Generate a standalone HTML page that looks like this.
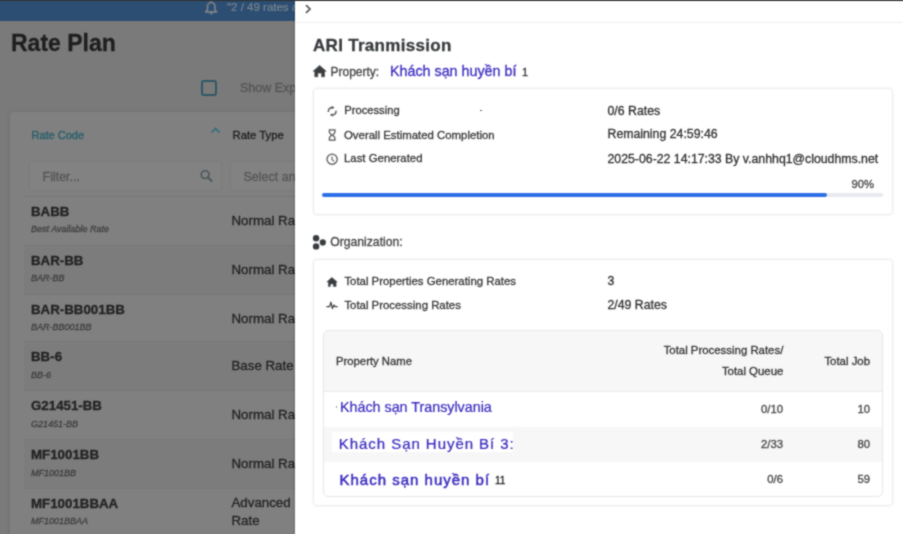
<!DOCTYPE html>
<html><head><meta charset="utf-8"><style>
html,body{margin:0;padding:0;width:903px;height:534px;overflow:hidden;background:#fff}
body{position:relative;font-family:"Liberation Sans", sans-serif}
#wrap{position:absolute;left:0;top:0;width:903px;height:534px;overflow:hidden;filter:url(#bl)}
.t{position:absolute;white-space:nowrap;font-family:"Liberation Sans", sans-serif;-webkit-text-stroke:0.3px}
</style></head><body><svg width="0" height="0" style="position:absolute"><filter id="bl" x="0" y="0" width="903" height="534" filterUnits="userSpaceOnUse" color-interpolation-filters="sRGB"><feConvolveMatrix order="3" kernelMatrix="1 2 1 2 8 2 1 2 1" divisor="20" edgeMode="duplicate"/></filter></svg><div id="wrap">
<div style="position:absolute;left:0px;top:0px;width:903px;height:1px;background:#2f3235"></div>
<div style="position:absolute;left:0px;top:1px;width:295px;height:19.5px;background:#2b4e72"></div>
<div style="position:absolute;left:0px;top:20.5px;width:295px;height:514px;background:#7a7a7a"></div>
<svg style="position:absolute;left:200px;top:0px" width="22" height="18" viewBox="0 0 22 18"><path d="M5.6 11.8 C7.2 11 7.5 10 7.5 9 V6.6 A3.7 4.3 0 0 1 14.9 6.6 V9 C14.9 10 15.2 11 16.8 11.8 Z" fill="none" stroke="#7e8288" stroke-width="1.7" stroke-linejoin="round"/><path d="M9.9 12.6 A1.3 1.5 0 0 0 12.5 12.6 Z" fill="#7e8288" stroke="#7e8288" stroke-width="0.8"/><circle cx="11.2" cy="1.9" r="0.8" fill="#7e8288"/></svg>
<div class="t" style="left:227px;top:1.87px;font-size:11.5px;line-height:11.5px;color:#7c8590;font-weight:normal;font-style:normal;letter-spacing:0px;-webkit-text-stroke:0.2px #7c8590;">"2 / 49 rates a</div>
<div class="t" style="left:11px;top:31.93px;font-size:23px;line-height:23px;color:#1e1e1e;font-weight:bold;font-style:normal;letter-spacing:0px;">Rate Plan</div>
<div style="position:absolute;left:200.5px;top:80px;width:16px;height:16px;box-sizing:border-box;border:2px solid #2d5866;border-radius:3px"></div>
<div class="t" style="left:240px;top:82.02px;font-size:12.5px;line-height:12.5px;color:#555;font-weight:normal;font-style:normal;letter-spacing:0px;">Show Exp</div>
<div style="position:absolute;left:10px;top:112px;width:300px;height:430px;background:#808080;border-radius:4px;box-shadow:0 0 4px rgba(0,0,0,0.1)"></div>
<div class="t" style="left:31.5px;top:130.29px;font-size:11px;line-height:11px;color:#2a5f6c;font-weight:normal;font-style:normal;letter-spacing:0px;-webkit-text-stroke:0.4px #2a5f6c;">Rate Code</div>
<svg style="position:absolute;left:210px;top:126px" width="11" height="8" viewBox="0 0 11 8"><path d="M1.5 6.5 L5.5 2.5 L9.5 6.5" fill="none" stroke="#2e6b7c" stroke-width="1.6"/></svg>
<div class="t" style="left:232.5px;top:129.73px;font-size:11.3px;line-height:11.3px;color:#1c1c1c;font-weight:normal;font-style:normal;letter-spacing:0px;-webkit-text-stroke:0.3px #1c1c1c;">Rate Type</div>
<div style="position:absolute;left:28.5px;top:160.7px;width:193px;height:30.3px;box-sizing:border-box;border:1px solid #7b7b7b;border-radius:3px;background:#828282"></div>
<div class="t" style="left:42.5px;top:170.52px;font-size:12.5px;line-height:12.5px;color:#565656;font-weight:normal;font-style:normal;letter-spacing:0px;-webkit-text-stroke:0.3px #565656;">Filter...</div>
<svg style="position:absolute;left:195px;top:160px" width="24" height="24" viewBox="0 0 24 24"><circle cx="10.1" cy="14.6" r="3.9" fill="none" stroke="#4b555a" stroke-width="1.6"/><path d="M13 17.5 L16.6 21" stroke="#4b555a" stroke-width="1.8" stroke-linecap="round"/></svg>
<div style="position:absolute;left:229.5px;top:161px;width:80px;height:30px;box-sizing:border-box;border:1px solid #7b7b7b;border-radius:3px;background:#828282"></div>
<div class="t" style="left:243.5px;top:170.52px;font-size:12.5px;line-height:12.5px;color:#565656;font-weight:normal;font-style:normal;letter-spacing:0px;-webkit-text-stroke:0.3px #565656;">Select an</div>
<div style="position:absolute;left:24px;top:195.5px;width:290px;height:1px;background:#777"></div>
<div class="t" style="left:31px;top:204.54px;font-size:13.3px;line-height:13.3px;color:#222;font-weight:bold;font-style:normal;letter-spacing:0px;">BABB</div>
<div class="t" style="left:31px;top:225.48px;font-size:9px;line-height:9px;color:#3e3e3e;font-weight:normal;font-style:italic;letter-spacing:0px;">Best Available Rate</div>
<div class="t" style="left:231.5px;top:213.84px;font-size:13.3px;line-height:13.3px;color:#222;font-weight:normal;font-style:normal;letter-spacing:0px;">Normal Rate</div>
<div style="position:absolute;left:24px;top:244.5px;width:290px;height:49.0px;background:#7c7c7c"></div>
<div style="position:absolute;left:24px;top:244.5px;width:290px;height:1px;background:#777"></div>
<div class="t" style="left:31px;top:253.54px;font-size:13.3px;line-height:13.3px;color:#222;font-weight:bold;font-style:normal;letter-spacing:0px;">BAR-BB</div>
<div class="t" style="left:31px;top:274.48px;font-size:9px;line-height:9px;color:#3e3e3e;font-weight:normal;font-style:italic;letter-spacing:0px;">BAR-BB</div>
<div class="t" style="left:231.5px;top:262.84px;font-size:13.3px;line-height:13.3px;color:#222;font-weight:normal;font-style:normal;letter-spacing:0px;">Normal Rate</div>
<div style="position:absolute;left:24px;top:293.5px;width:290px;height:1px;background:#777"></div>
<div class="t" style="left:31px;top:302.54px;font-size:13.3px;line-height:13.3px;color:#222;font-weight:bold;font-style:normal;letter-spacing:0px;">BAR-BB001BB</div>
<div class="t" style="left:31px;top:323.48px;font-size:9px;line-height:9px;color:#3e3e3e;font-weight:normal;font-style:italic;letter-spacing:0px;">BAR-BB001BB</div>
<div class="t" style="left:231.5px;top:311.84px;font-size:13.3px;line-height:13.3px;color:#222;font-weight:normal;font-style:normal;letter-spacing:0px;">Normal Rate</div>
<div style="position:absolute;left:24px;top:341px;width:290px;height:49px;background:#7c7c7c"></div>
<div style="position:absolute;left:24px;top:341px;width:290px;height:1px;background:#777"></div>
<div class="t" style="left:31px;top:350.04px;font-size:13.3px;line-height:13.3px;color:#222;font-weight:bold;font-style:normal;letter-spacing:0px;">BB-6</div>
<div class="t" style="left:31px;top:370.98px;font-size:9px;line-height:9px;color:#3e3e3e;font-weight:normal;font-style:italic;letter-spacing:0px;">BB-6</div>
<div class="t" style="left:231.5px;top:359.34px;font-size:13.3px;line-height:13.3px;color:#222;font-weight:normal;font-style:normal;letter-spacing:0px;">Base Rate</div>
<div style="position:absolute;left:24px;top:390px;width:290px;height:1px;background:#777"></div>
<div class="t" style="left:31px;top:399.04px;font-size:13.3px;line-height:13.3px;color:#222;font-weight:bold;font-style:normal;letter-spacing:0px;">G21451-BB</div>
<div class="t" style="left:31px;top:419.98px;font-size:9px;line-height:9px;color:#3e3e3e;font-weight:normal;font-style:italic;letter-spacing:0px;">G21451-BB</div>
<div class="t" style="left:231.5px;top:408.34px;font-size:13.3px;line-height:13.3px;color:#222;font-weight:normal;font-style:normal;letter-spacing:0px;">Normal Rate</div>
<div style="position:absolute;left:24px;top:439px;width:290px;height:48.5px;background:#7c7c7c"></div>
<div style="position:absolute;left:24px;top:439px;width:290px;height:1px;background:#777"></div>
<div class="t" style="left:31px;top:448.04px;font-size:13.3px;line-height:13.3px;color:#222;font-weight:bold;font-style:normal;letter-spacing:0px;">MF1001BB</div>
<div class="t" style="left:31px;top:468.98px;font-size:9px;line-height:9px;color:#3e3e3e;font-weight:normal;font-style:italic;letter-spacing:0px;">MF1001BB</div>
<div class="t" style="left:231.5px;top:457.34px;font-size:13.3px;line-height:13.3px;color:#222;font-weight:normal;font-style:normal;letter-spacing:0px;">Normal Rate</div>
<div style="position:absolute;left:24px;top:487.5px;width:290px;height:1px;background:#777"></div>
<div class="t" style="left:31px;top:496.54px;font-size:13.3px;line-height:13.3px;color:#222;font-weight:bold;font-style:normal;letter-spacing:0px;">MF1001BBAA</div>
<div class="t" style="left:31px;top:517.48px;font-size:9px;line-height:9px;color:#3e3e3e;font-weight:normal;font-style:italic;letter-spacing:0px;">MF1001BBAA</div>
<div class="t" style="left:231.5px;top:496.04px;font-size:13.3px;line-height:13.3px;color:#222;font-weight:normal;font-style:normal;letter-spacing:0px;">Advanced</div>
<div class="t" style="left:231.5px;top:514.04px;font-size:13.3px;line-height:13.3px;color:#222;font-weight:normal;font-style:normal;letter-spacing:0px;">Rate</div>
<div style="position:absolute;left:295px;top:1px;width:608px;height:533px;background:#fff;box-shadow:-1px 0 2px rgba(0,0,0,0.15)"></div>
<svg style="position:absolute;left:304px;top:4px" width="8" height="10" viewBox="0 0 8 10"><path d="M2 1.2 L6 5 L2 8.8" fill="none" stroke="#555" stroke-width="1.7"/></svg>
<div style="position:absolute;left:295px;top:21.5px;width:608px;height:1px;background:#efefef"></div>
<div class="t" style="left:313px;top:36.71px;font-size:17px;line-height:17px;color:#373a3d;font-weight:bold;font-style:normal;letter-spacing:0.3px;">ARI Tranmission</div>
<svg style="position:absolute;left:310px;top:62px" width="20" height="18" viewBox="0 0 20 18"><path d="M9.6 3.4 L16.2 9.3 L14.5 9.3 L14.5 14.8 L11.6 14.8 L11.6 11.1 L7.8 11.1 L7.8 14.8 L4.8 14.8 L4.8 9.3 L3.1 9.3 Z" fill="#3a3d40" stroke="#3a3d40" stroke-width="0.6" stroke-linejoin="round"/></svg>
<div class="t" style="left:330.5px;top:65.84px;font-size:12px;line-height:12px;color:#444;font-weight:normal;font-style:normal;letter-spacing:0px;">Property:</div>
<div class="t" style="left:390px;top:63.80px;font-size:14.3px;line-height:14.3px;color:#3a2ac0;font-weight:normal;font-style:normal;letter-spacing:0px;">Khách sạn huyền bí</div>
<div class="t" style="left:522px;top:66.59px;font-size:11px;line-height:11px;color:#333;font-weight:normal;font-style:normal;letter-spacing:0px;">1</div>
<div style="position:absolute;left:312.5px;top:88px;width:580px;height:126.5px;box-sizing:border-box;border:1px solid #ededed;border-radius:4px;box-shadow:0 0 3px rgba(0,0,0,0.07)"></div>
<svg style="position:absolute;left:327px;top:105px" width="11" height="12" viewBox="0 0 11 12"><path d="M5.9 2.5 A3.9 3.9 0 0 0 1.4 7 M9 5.6 A3.9 3.9 0 0 1 4.5 10.1" fill="none" stroke="#555" stroke-width="1.4"/><path d="M4.6 1 L7.6 2.6 L4.9 4.3 Z M5.8 11.6 L2.8 10 L5.5 8.3 Z" fill="#555"/></svg>
<div class="t" style="left:344.3px;top:105.12px;font-size:11.2px;line-height:11.2px;color:#363636;font-weight:normal;font-style:normal;letter-spacing:0px;">Processing</div>
<div style="position:absolute;left:479.5px;top:109.8px;width:2px;height:1.3px;background:#666"></div>
<svg style="position:absolute;left:324px;top:127px" width="16" height="16" viewBox="0 0 16 16"><path d="M4.8 2.9 H11.6 M4.8 13.2 H11.6 M5.4 2.9 V5 C5.4 6.8 7.6 7.3 7.6 8.1 C7.6 8.9 5.4 9.4 5.4 11.2 V13.2 M10.9 2.9 V5 C10.9 6.8 8.7 7.3 8.7 8.1 C8.7 8.9 10.9 9.4 10.9 11.2 V13.2" fill="none" stroke="#555" stroke-width="1.3"/></svg>
<div class="t" style="left:344px;top:129.75px;font-size:11.4px;line-height:11.4px;color:#363636;font-weight:normal;font-style:normal;letter-spacing:0px;">Overall Estimated Completion</div>
<svg style="position:absolute;left:324px;top:151px" width="16" height="16" viewBox="0 0 16 16"><circle cx="8.1" cy="8.2" r="5.1" fill="none" stroke="#555" stroke-width="1.3"/><path d="M8 5.6 V8.6 L10 10.2" fill="none" stroke="#555" stroke-width="1.1"/></svg>
<div class="t" style="left:344px;top:153.45px;font-size:11.4px;line-height:11.4px;color:#363636;font-weight:normal;font-style:normal;letter-spacing:0px;">Last Generated</div>
<div class="t" style="left:607.5px;top:104.69px;font-size:12.3px;line-height:12.3px;color:#303030;font-weight:normal;font-style:normal;letter-spacing:0px;">0/6 Rates</div>
<div class="t" style="left:607.5px;top:128.19px;font-size:12.3px;line-height:12.3px;color:#303030;font-weight:normal;font-style:normal;letter-spacing:0px;">Remaining 24:59:46</div>
<div class="t" style="left:607.5px;top:152.59px;font-size:12.3px;line-height:12.3px;color:#303030;font-weight:normal;font-style:normal;letter-spacing:0px;">2025-06-22 14:17:33 By v.anhhq1@cloudhms.net</div>
<div class="t" style="right:29px;top:179.12px;font-size:11.2px;line-height:11.2px;color:#444;font-weight:normal;font-style:normal;letter-spacing:0px;">90%</div>
<div style="position:absolute;left:322px;top:192.5px;width:561px;height:4px;background:#e8eaef;border-radius:2px"></div>
<div style="position:absolute;left:322px;top:192.5px;width:505px;height:4px;background:#2d6fe8;border-radius:2px"></div>
<svg style="position:absolute;left:308px;top:230px" width="24" height="24" viewBox="0 0 24 24"><circle cx="8.1" cy="8.3" r="3.2" fill="#3a3d40"/><circle cx="8.1" cy="16.4" r="3.2" fill="#3a3d40"/><circle cx="14.8" cy="12.4" r="3.1" fill="#3a3d40"/></svg>
<div class="t" style="left:330.2px;top:236.27px;font-size:12.2px;line-height:12.2px;color:#444;font-weight:normal;font-style:normal;letter-spacing:0px;">Organization:</div>
<div style="position:absolute;left:312.5px;top:259px;width:580px;height:246.5px;box-sizing:border-box;border:1px solid #ededed;border-radius:4px;box-shadow:0 0 3px rgba(0,0,0,0.07)"></div>
<svg style="position:absolute;left:322px;top:272px" width="20" height="18" viewBox="0 0 20 18"><path d="M9.8 5.4 L15.2 9.9 L14.1 9.9 L14.1 14.5 L11.4 14.5 L11.4 12 L8.3 12 L8.3 14.5 L6.4 14.5 L6.4 9.9 L4.9 9.9 Z" fill="#3a3d40" stroke="#3a3d40" stroke-width="0.5" stroke-linejoin="round"/></svg>
<div class="t" style="left:344.4px;top:276.25px;font-size:11.4px;line-height:11.4px;color:#363636;font-weight:normal;font-style:normal;letter-spacing:0px;">Total Properties Generating Rates</div>
<svg style="position:absolute;left:322px;top:296px" width="20" height="16" viewBox="0 0 20 16"><path d="M4.4 10.6 H7.6 L8.9 6.2 L10.4 12.6 L11.9 9 L13.2 10.6 H15.6" fill="none" stroke="#3a3d40" stroke-width="1.2" stroke-linejoin="round"/></svg>
<div class="t" style="left:344.4px;top:299.75px;font-size:11.4px;line-height:11.4px;color:#363636;font-weight:normal;font-style:normal;letter-spacing:0px;">Total Processing Rates</div>
<div class="t" style="left:607.5px;top:275.19px;font-size:12.3px;line-height:12.3px;color:#303030;font-weight:normal;font-style:normal;letter-spacing:0px;">3</div>
<div class="t" style="left:607.5px;top:298.69px;font-size:12.3px;line-height:12.3px;color:#303030;font-weight:normal;font-style:normal;letter-spacing:0px;">2/49 Rates</div>
<div style="position:absolute;left:322.5px;top:330px;width:560.5px;height:166.5px;box-sizing:border-box;border:1px solid #e6e7ea;border-radius:5px;overflow:hidden"><div style="position:absolute;left:0;top:0;right:0;height:60px;background:#f7f7f7;border-bottom:1px solid #eaeaea"></div><div style="position:absolute;left:0;top:95.5px;right:0;height:35px;background:#f7f7f7"></div></div>
<div class="t" style="left:336px;top:356.43px;font-size:11.3px;line-height:11.3px;color:#333;font-weight:normal;font-style:normal;letter-spacing:0px;">Property Name</div>
<div class="t" style="right:119.70000000000005px;top:345.35px;font-size:11.4px;line-height:11.4px;color:#333;font-weight:normal;font-style:normal;letter-spacing:0px;">Total Processing Rates/</div>
<div class="t" style="right:119.70000000000005px;top:366.25px;font-size:11.4px;line-height:11.4px;color:#333;font-weight:normal;font-style:normal;letter-spacing:0px;">Total Queue</div>
<div class="t" style="right:33px;top:356.05px;font-size:11.4px;line-height:11.4px;color:#333;font-weight:normal;font-style:normal;letter-spacing:0px;">Total Job</div>
<div style="position:absolute;left:336px;top:405.5px;width:1.2px;height:2px;background:#999"></div>
<div class="t" style="left:340px;top:399.70px;font-size:14.3px;line-height:14.3px;color:#3727bd;font-weight:normal;font-style:normal;letter-spacing:0px;-webkit-text-stroke:0.2px #3727bd;">Khách sạn Transylvania</div>
<div class="t" style="right:120px;top:403.63px;font-size:11.3px;line-height:11.3px;color:#444;font-weight:normal;font-style:normal;letter-spacing:0px;">0/10</div>
<div class="t" style="right:33px;top:403.63px;font-size:11.3px;line-height:11.3px;color:#444;font-weight:normal;font-style:normal;letter-spacing:0px;">10</div>
<div style="position:absolute;left:332px;top:432px;width:181px;height:20px;background:#fff"></div>
<div class="t" style="left:338.8px;top:436.20px;font-size:15px;line-height:15px;color:#3727bd;font-weight:normal;font-style:normal;letter-spacing:0.95px;-webkit-text-stroke:0.2px #3727bd;">Khách Sạn Huyền Bí 3:</div>
<div class="t" style="right:120px;top:439.03px;font-size:11.3px;line-height:11.3px;color:#444;font-weight:normal;font-style:normal;letter-spacing:0px;">2/33</div>
<div class="t" style="right:33px;top:439.03px;font-size:11.3px;line-height:11.3px;color:#444;font-weight:normal;font-style:normal;letter-spacing:0px;">80</div>
<div class="t" style="left:339.5px;top:472.10px;font-size:15px;line-height:15px;color:#3727bd;font-weight:normal;font-style:normal;letter-spacing:1.0px;-webkit-text-stroke:0.45px #3727bd;">Khách sạn huyền bí</div>
<div class="t" style="left:495px;top:475.94px;font-size:10px;line-height:10px;color:#222;font-weight:normal;font-style:normal;letter-spacing:0px;">11</div>
<div class="t" style="right:120px;top:474.33px;font-size:11.3px;line-height:11.3px;color:#444;font-weight:normal;font-style:normal;letter-spacing:0px;">0/6</div>
<div class="t" style="right:33px;top:474.33px;font-size:11.3px;line-height:11.3px;color:#444;font-weight:normal;font-style:normal;letter-spacing:0px;">59</div>
</div></body></html>
